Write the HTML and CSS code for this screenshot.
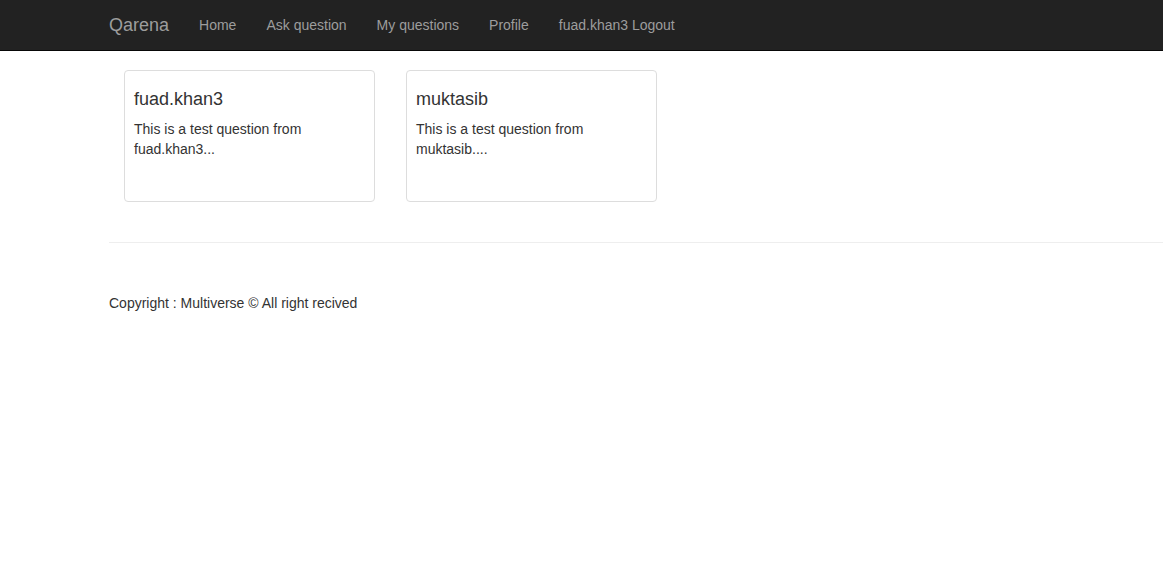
FILE: index.html
```html
<!DOCTYPE html>
<html lang="en">
<head>
<meta charset="utf-8">
<title>Qarena</title>
<link rel="stylesheet" href="styles.css">
</head>
<body>
<nav class="navbar">
  <div class="nav-inner">
    <a class="brand" href="#">Qarena</a>
    <ul class="nav-links">
      <li><a href="#">Home</a></li>
      <li><a href="#">Ask question</a></li>
      <li><a href="#">My questions</a></li>
      <li><a href="#">Profile</a></li>
      <li><a href="#">fuad.khan3 Logout</a></li>
    </ul>
  </div>
</nav>
<main class="content">
  <div class="cards">
    <div class="card">
      <h4 class="card-title">fuad.khan3</h4>
      <p class="card-text">This is a test question from fuad.khan3...</p>
    </div>
    <div class="card">
      <h4 class="card-title">muktasib</h4>
      <p class="card-text">This is a test question from muktasib....</p>
    </div>
  </div>
</main>
<hr class="divider">
<footer class="footer">Copyright : Multiverse © All right recived</footer>
</body>
</html>
```

FILE: styles.css
```css
* { box-sizing: border-box; }
html, body { margin: 0; padding: 0; }
body {
  font-family: "Liberation Sans", Arial, Helvetica, sans-serif;
  font-size: 14px;
  line-height: 20px;
  color: #333;
  background: #fff;
}
a { text-decoration: none; }

.navbar {
  height: 51px;
  background: #222;
  border-bottom: 1px solid #080808;
}
.nav-inner {
  display: flex;
  align-items: center;
  height: 50px;
  padding-left: 94px;
}
.brand {
  font-size: 18px;
  line-height: 20px;
  color: #9d9d9d;
  padding: 15px 15px;
}
.nav-links {
  display: flex;
  list-style: none;
  margin: 0;
  padding: 0;
}
.nav-links a {
  display: block;
  padding: 15px 15px;
  color: #9d9d9d;
  font-size: 14px;
  line-height: 20px;
}

.content {
  padding: 19px 0 0 124px;
}
.cards {
  display: flex;
  gap: 31px;
}
.card {
  width: 251px;
  height: 132px;
  border: 1px solid #ddd;
  border-radius: 4px;
  padding: 0 9px;
}
.card-title {
  margin: 19px 0 9px;
  font-size: 18px;
  font-weight: 500;
  line-height: 19.8px;
  color: #333;
}
.card-text {
  margin: 0;
}

.divider {
  margin: 40px 0 0 109px;
  border: 0;
  border-top: 1px solid #eee;
  height: 0;
}
.footer {
  padding: 50px 0 0 109px;
}
```
